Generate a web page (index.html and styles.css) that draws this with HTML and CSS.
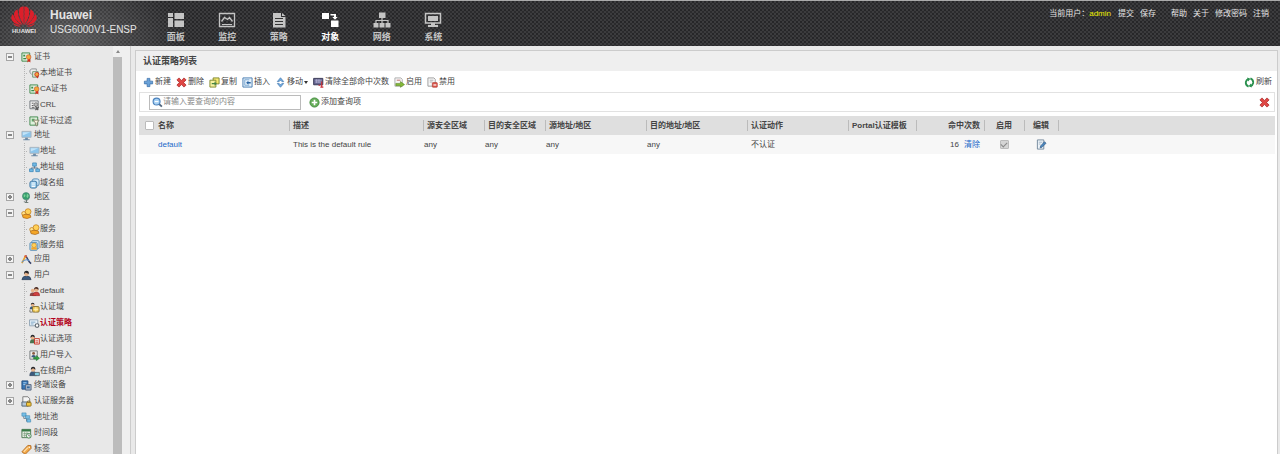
FILE: index.html
```html
<!DOCTYPE html>
<html lang="zh-CN">
<head>
<meta charset="utf-8">
<title>Huawei USG6000V1-ENSP</title>
<link rel="stylesheet" href="styles.css">
</head>
<body>
<svg class="sprite" aria-hidden="true">
  <symbol id="cert" viewBox="0 0 12 12"><path d="M1 1h8.500v9H1z" fill="#dff0dc" stroke="#3b8748"/><path d="M2.500 3h2v2h-2zM2.500 6.500h3v1.500h-3z" fill="#398a49"/><path d="M7.500 7l-.7 4.500L8.500 10l1.800 1.500L10 7z" fill="#d52a1c"/><circle cx="8.300" cy="5.500" r="2.600" fill="#f3a83a" stroke="#c9472a" stroke-width=".6"/></symbol>
  <symbol id="localcert" viewBox="0 0 12 12"><path d="M1 5V2.500L3 1h5v2M1 5l2 2" fill="#eee" stroke="#8a8d91"/><path d="M4 4h6v6H4z" fill="#dff0dc" stroke="#6d8d6b"/><circle cx="8.500" cy="7" r="2.200" fill="#f3a83a" stroke="#c9372a"/><path d="M7.500 9l2 2.500 1-2.500z" fill="#d52a1c"/></symbol>
  <symbol id="crl" viewBox="0 0 12 12"><path d="M1 1h9v8.500H1z" fill="#f1f1f1" stroke="#6f7478"/><path d="M3 3.500h2M3 6h2M3 8h3" stroke="#555"/><circle cx="7.500" cy="5" r="2" fill="#bbb" stroke="#777"/><path d="M7 7l3 4M10.500 7.500L7 11" stroke="#555" stroke-width="1.300"/></symbol>
  <symbol id="certfilter" viewBox="0 0 12 12"><path d="M1 1h8.500v9H1z" fill="#dff0dc" stroke="#3b8748"/><path d="M3 3h3v3H3z" fill="#5aa765"/><path d="M4.500 4.500h6.500L8.800 7.500V11L7 10V7.500z" fill="#fff5dd" stroke="#7c7f68"/></symbol>
  <symbol id="pc" viewBox="0 0 12 12"><path d="M1 1.500h10v6.500H1z" fill="#8bc5ec" stroke="#a9b5c0"/><path d="M2 2.500h8L2 6z" fill="#c2e3f8"/><path d="M4.500 8.500h3v1.500h2v1.300h-7V10h2z" fill="#6d8ba6"/></symbol>
  <symbol id="pcs" viewBox="0 0 12 12"><path d="M6 4v3M2.500 8V6.500h7V8" fill="none" stroke="#60758a"/><path d="M4 1h4v3.500H4zM.6 7.500h4v3h-4zM7.400 7.500h4v3h-4z" fill="#71bae5" stroke="#3b83b5" stroke-width=".8"/></symbol>
  <symbol id="domain" viewBox="0 0 12 12"><rect x="3.500" y="1" width="7.500" height="7.500" rx="2" fill="#d4eaf8" stroke="#4d87b2"/><rect x="1" y="3.500" width="7.500" height="7.500" rx="2" fill="#9dcdec" stroke="#37719f"/><path d="M3 5.500h3.500M3 7.500h3.500M3 9.300h3.500" stroke="#fff"/></symbol>
  <symbol id="globe" viewBox="0 0 12 12"><path d="M3 10.500q5-.5 6.500-5" fill="none" stroke="#8d9396"/><circle cx="5.500" cy="4.500" r="3.900" fill="#34a06d" stroke="#4c8375" stroke-width=".7"/><path d="M3 2.500l2 .5-.5 2L3 6zM6.500 1.500l2 2-1 3-1.500-1z" fill="#7dd19a"/><path d="M6 8.500v3M4 11.500h4" stroke="#64726c"/></symbol>
  <symbol id="service" viewBox="0 0 12 12"><circle cx="7.700" cy="4" r="3.200" fill="#ffd159" stroke="#c17c17" stroke-width=".8"/><circle cx="3" cy="6" r="2.200" fill="#ffe18b" stroke="#c17c17" stroke-width=".8"/><path d="M1.500 8l3-1.200 5.500.7.800 2.500-4 1.500-4.500-1z" fill="#f4a626" stroke="#a96719" stroke-width=".8"/></symbol>
  <symbol id="servicegroup" viewBox="0 0 12 12"><rect x="3" y=".8" width="8" height="8.500" rx="1" fill="#d3e8f7" stroke="#5c8eb4"/><rect x="1" y="2.800" width="8" height="8.500" rx="1" fill="#b2d4ec" stroke="#5c8eb4"/><circle cx="5.500" cy="5.800" r="2.500" fill="#ffd159" stroke="#c17c17" stroke-width=".6"/><path d="M2.500 8h6v2.500h-6z" fill="#f4a626"/></symbol>
  <symbol id="app" viewBox="0 0 12 12"><path d="M1 10L5 2" stroke="#e8a32b" stroke-width="1.800"/><path d="M5 1.500l4 7 2 2" fill="none" stroke="#333f68" stroke-width="1.600"/><path d="M1 9q3-4 8-2" fill="none" stroke="#5b91d0" stroke-width="1.200"/><circle cx="5" cy="2.500" r="1.300" fill="#dd6545"/></symbol>
  <symbol id="user" viewBox="0 0 12 12"><path d="M1 10.500q.4-4 5-4t5 4z" fill="#3b5a7e" stroke="#28394e" stroke-width=".7"/><circle cx="6" cy="4" r="2.700" fill="#e7b48c"/><path d="M3.300 4q0-3.300 2.700-3.300T8.700 4Q6 3.500 5 2.700 4.300 4 3.300 4z" fill="#26282d"/></symbol>
  <symbol id="userred" viewBox="0 0 12 12"><circle cx="4" cy="5" r="2" fill="#e7b48c"/><path d="M.8 11q0-3.800 3.200-3.800T8 11z" fill="#8a4a4a"/><path d="M4 10.500q.4-4 4-4t3.600 4z" fill="#cf4040" stroke="#8c2525" stroke-width=".6"/><circle cx="8" cy="4" r="2.400" fill="#e7b48c"/><path d="M5.500 4Q5.500 1 8 1t2.500 3L7.500 2.700z" fill="#4a2a22"/></symbol>
  <symbol id="userdomain" viewBox="0 0 12 12"><path d="M.8 8q0-3.500 3-3.500T7 8z" fill="#3b5a7e"/><circle cx="4" cy="3" r="2" fill="#e7b48c"/><path d="M2 3q0-2.300 2-2.300T6 3L4 2z" fill="#26282d"/><rect x="4" y="5" width="7" height="6" rx="1" fill="#f6d05d" stroke="#80692c"/><path d="M5 8h5M7.500 5.500v5" stroke="#fff3bc"/><path d="M1 8.500v2.500h3" fill="none" stroke="#777"/></symbol>
  <symbol id="policy" viewBox="0 0 12 12"><path d="M.6 2h9v6.500h-9z" fill="#e9f2f9" stroke="#8ca1b2"/><path d="M2 4.500h5M2 6.500h3" stroke="#76a1c3"/><circle cx="8.800" cy="8.300" r="2" fill="#fff" stroke="#636b73" stroke-width="1.300"/></symbol>
  <symbol id="useroption" viewBox="0 0 12 12"><path d="M1 10q0-4.500 3.500-4.500T8 10z" fill="#4b7550"/><circle cx="4" cy="3.800" r="2.300" fill="#e7b48c"/><path d="M1.600 4q0-3.200 2.400-3.200T6.400 4L4 2.500z" fill="#26282d"/><path d="M6 5h5.300v6H6z" fill="#f8e9e6" stroke="#c33729"/><path d="M7 7.500h3M7 9.500h3" stroke="#d34a3b"/></symbol>
  <symbol id="userimport" viewBox="0 0 12 12"><path d="M1 1h8v9H1z" fill="#eee" stroke="#72777a"/><circle cx="5" cy="3.700" r="1.600" fill="#8b5d45"/><path d="M2.500 8q0-2.500 2.500-2.500T7.500 8z" fill="#3b5a7e"/><path d="M5 8h3V6l3.500 3L8 11.700v-2H5z" fill="#31a342" stroke="#176a28" stroke-width=".5"/></symbol>
  <symbol id="useronline" viewBox="0 0 12 12"><path d="M.8 10.500q.2-4.500 3.700-4.500T8 10.500z" fill="#3b5a7e" stroke="#28394e" stroke-width=".6"/><circle cx="4.500" cy="4" r="2.300" fill="#e7b48c"/><path d="M2 4q0-3.200 2.500-3.200T7 4L4.500 2.500z" fill="#26282d"/><path d="M6 7h5.300v3.500H6z" fill="#83cde0" stroke="#44525b" stroke-width=".8"/></symbol>
  <symbol id="device" viewBox="0 0 12 12"><path d="M1 1h6.500v9H1z" fill="#3978b8" stroke="#244e80"/><path d="M2.500 3H6M2.500 5H6" stroke="#add4f2"/><path d="M5 5h6v6H5z" fill="#a8b9ce" stroke="#53657e"/><path d="M6.500 7h3v2h-3z" fill="#34689e"/></symbol>
  <symbol id="authserver" viewBox="0 0 12 12"><path d="M2 .8h5.500L9.500 3v7.500H2z" fill="#f5f5f5" stroke="#777"/><path d="M1 6.500h7V11H1z" fill="#b5c7d8" stroke="#526575"/><rect x="6" y="7" width="5" height="4" rx=".5" fill="#f3c73b" stroke="#8e7223"/><path d="M7.300 7V5.500h2.400V7" fill="none" stroke="#8e7223"/></symbol>
  <symbol id="pool" viewBox="0 0 12 12"><path d="M3 4v3h3M6 6v4h3" fill="none" stroke="#6c7f8d"/><path d="M1 1h4.500v3.500H1zM5 4h4.500v3H5zM6.500 8h4v3h-4z" fill="#76bfe7" stroke="#458bb5" stroke-width=".7"/></symbol>
  <symbol id="time" viewBox="0 0 12 12"><path d="M1 1.500h9.500v9H1z" fill="#e7f0e4" stroke="#4c7551"/><path d="M1 1.500h9.500v2.300H1z" fill="#387b47"/><path d="M2.500 6h6M2.500 8h6M4 4v6M6.500 4v6" stroke="#7d987e" stroke-width=".7"/><circle cx="8.500" cy="8.500" r="2.500" fill="#fff" stroke="#4b8d56"/><path d="M8.500 7v1.700h1.300" fill="none" stroke="#333" stroke-width=".7"/></symbol>
  <symbol id="tag" viewBox="0 0 12 12"><path d="M1 8.500L7.500 1.500l3.300.3.200 3L4.500 11.300z" fill="#f2a848" stroke="#b56c22"/><path d="M3 8.500L7.500 4" stroke="#ffdda4" stroke-width="1.400"/><circle cx="9" cy="3.500" r=".8" fill="#fff"/></symbol>
  <symbol id="add" viewBox="0 0 12 12"><path d="M4.500 1.500h3v3h3v3h-3v3h-3v-3h-3v-3h3z" fill="#6aa2d8" stroke="#3b6fa8" stroke-width=".8"/></symbol>
  <symbol id="del" viewBox="0 0 12 12"><path d="M3.200 1L6 3.700 8.800 1 11 3.200 8.300 6 11 8.800 8.800 11 6 8.300 3.200 11 1 8.800 3.700 6 1 3.200z" fill="#df4744" stroke="#a92525" stroke-width=".8"/></symbol>
  <symbol id="copy" viewBox="0 0 12 12"><path d="M4.500 1h6.500v6.500H4.500z" fill="#f5e870" stroke="#7d852d"/><path d="M1 3.500h6.500V11H1z" fill="#f7f1a0" stroke="#7d852d"/><path d="M3 6.500h3V5l2.500 2.300L6 9.500V8H3z" fill="#458444"/></symbol>
  <symbol id="insert" viewBox="0 0 12 12"><path d="M1 1h10v10H1z" fill="#e5f1fb" stroke="#4379af"/><path d="M3 3h5M3 3v6h5" fill="none" stroke="#7aa7d1"/><path d="M9.500 5.500H7V4L4.500 6.200 7 8.500V7h2.500z" fill="#2a64a2"/></symbol>
  <symbol id="move" viewBox="0 0 12 12"><path d="M6 .8L9.500 5h-2L6 3.500 4.500 5h-2zM6 11.200L9.500 7h-2L6 8.500 4.500 7h-2z" fill="#72abdf" stroke="#3e75ad" stroke-width=".7"/></symbol>
  <symbol id="clear" viewBox="0 0 12 12"><path d="M.7 1.500h10v7h-10z" fill="#65658f" stroke="#353552"/><path d="M2 3.500h7.500M2 5.500h7.500M4 2.500v4M6.500 2.500v4" stroke="#b9b8d8" stroke-width=".8"/><path d="M6 9h2M9.500 5v6M8 11h3.300" stroke="#c92e37" stroke-width="1.300"/></symbol>
  <symbol id="enable" viewBox="0 0 12 12"><path d="M1 1h6.500L9 2.500V10H1z" fill="#f8f8f8" stroke="#aaa"/><path d="M3 3.500h4" stroke="#bb6666"/><path d="M2 7h5V5l4.500 3.300L7 11.300V9.500H2z" fill="#84b936" stroke="#557e20" stroke-width=".6"/></symbol>
  <symbol id="disable" viewBox="0 0 12 12"><path d="M1 1h6.500L9 2.500V10H1z" fill="#f8f8f8" stroke="#999"/><path d="M3 3.500h4M3 5.500h3" stroke="#aaa"/><rect x="5.800" y="6" width="5.500" height="5.300" rx="1" fill="#d85449" stroke="#ab332b" stroke-width=".6"/><path d="M7 8.700h3.200" stroke="#fff" stroke-width="1.300"/></symbol>
  <symbol id="refresh" viewBox="0 0 12 12"><path d="M5 10.500Q1.500 9 2 5.500 2.500 3 5 2M7 1.500Q10.500 3 10 6.500 9.500 9 7 10" fill="none" stroke="#2b914f" stroke-width="2"/><path d="M3.500.5L7 2 4.500 5zM8.500 11.500L5 10l2.500-3z" fill="#2b914f"/></symbol>
  <symbol id="search" viewBox="0 0 12 12"><path d="M7.500 7.500l3.300 3" stroke="#4f647a" stroke-width="2"/><circle cx="5" cy="5" r="3.800" fill="#a8d1f4" stroke="#4b82bd" stroke-width="1.200"/><path d="M3 5h4" stroke="#fff" stroke-width="1.200"/></symbol>
  <symbol id="addround" viewBox="0 0 12 12"><circle cx="6" cy="6" r="5" fill="#66ad5a" stroke="#438c3d"/><path d="M6 3v6M3 6h6" stroke="#fff" stroke-width="1.800"/></symbol>
  <symbol id="edit" viewBox="0 0 12 12"><path d="M1.500 1h7v10h-7z" fill="#eef4f9" stroke="#71859a"/><path d="M3 3.500h4M3 5.500h2" stroke="#a2b5c6"/><path d="M4.500 9.500l.5-2L9.300 3l1.700 1.600-4.500 4.500z" fill="#4a86bf" stroke="#2d537b" stroke-width=".7"/></symbol>
</svg>

<header class="topbar">
  <div class="brand">
    <svg class="logo" viewBox="0 0 28 22" role="img" aria-label="Huawei">
      <g fill="#dc1f2a"><path d="M13.700 20Q6 8 9.500 2q2-1.700 4.200-1.500z"/><path d="M14.300 20Q22 8 18.500 2 16.500.3 14.300.5z"/><path d="M12.700 20.200Q2.500 13.500 3.500 7.500 4 5 7.300 3.500q0 8.500 5.400 16.700z"/><path d="M15.300 20.200Q25.500 13.500 24.500 7.500 24 5 20.700 3.500q0 8.500-5.400 16.700z"/><path d="M11.700 20.500Q.6 18 .6 12.500q0-2.300 1.700-4 2.200 7 9.400 12z"/><path d="M16.300 20.500q11.100-2.500 11.100-8 0-2.300-1.700-4-2.200 7-9.400 12z"/><path d="M11 21.200q-6 1.300-8.500-3 4 2.300 8.500 3zM17 21.200q6 1.300 8.500-3-4 2.300-8.500 3z"/></g>
    </svg>
    <span class="logo-word">HUAWEI</span>
  </div>
  <div class="product"><strong>Huawei</strong><span>USG6000V1-ENSP</span></div>
  <nav class="mainnav">
    <a href="#"><svg viewBox="0 0 18 16"><path fill="currentColor" d="M1 1h5v4H1zM1 6h5v9H1zM7.500 1H17v6H7.500zM7.500 8.500H17V15H7.500z"/></svg>面板</a>
    <a href="#"><svg viewBox="0 0 18 16"><path fill="none" stroke="currentColor" stroke-width="1.300" d="M1.500 1.500h15v13h-15zM3.500 9.500l3-4 3 2 2-2 3 4"/><path fill="currentColor" d="M4 12h10v1H4z"/></svg>监控</a>
    <a href="#"><svg viewBox="0 0 18 16"><path fill="currentColor" d="M3 1h8v4h4.500v10.500H3z"/><path fill="currentColor" d="M12 1l3.500 3H12z"/><path stroke="#333" d="M5 6.500h8M5 9.500h8M5 12.500h8"/></svg>策略</a>
    <a href="#" class="current"><svg viewBox="0 0 18 16"><path fill="currentColor" d="M1 1h7v6H1zM10 8.500h7.500V15H10zM9.500 2H15v3h1.800L14 7.800 11.200 5H13V3.500H9.500z"/></svg>对象</a>
    <a href="#"><svg viewBox="0 0 18 16"><path fill="currentColor" d="M6 .5h6.500V6H6zM.5 11h5v4.500h-5zM6.500 11h5v4.500h-5zM12.500 11h5v4.500h-5z"/><path fill="none" stroke="currentColor" stroke-width="1.200" d="M9 6v5M3 11V8.500h12V11"/></svg>网络</a>
    <a href="#"><svg viewBox="0 0 18 16"><path fill="none" stroke="currentColor" stroke-width="1.500" d="M1.500 1.500h15v9.500h-15z"/><path fill="currentColor" d="M4 4h10v5H4zM7 11h4v2h3v2H4v-2h3z"/></svg>系统</a>
  </nav>
  <div class="account">
    <span>当前用户：<b>admin</b></span>
    <span class="links"><a href="#">提交</a><a href="#">保存</a></span>
    <span class="links"><a href="#">帮助</a><a href="#">关于</a><a href="#">修改密码</a><a href="#">注销</a></span>
  </div>
</header>

<div class="workspace">
  <aside class="sidebar">
    <ul class="tree">
      <li><button class="toggle open" aria-label="折叠"></button><a href="#"><svg><use href="#cert"/></svg>证书</a>
        <ul><li><a href="#"><svg><use href="#localcert"/></svg>本地证书</a></li><li><a href="#"><svg><use href="#cert"/></svg>CA证书</a></li><li><a href="#"><svg><use href="#crl"/></svg>CRL</a></li><li><a href="#"><svg><use href="#certfilter"/></svg>证书过滤</a></li></ul></li>
      <li><button class="toggle open" aria-label="折叠"></button><a href="#"><svg><use href="#pc"/></svg>地址</a>
        <ul><li><a href="#"><svg><use href="#pc"/></svg>地址</a></li><li><a href="#"><svg><use href="#pcs"/></svg>地址组</a></li><li><a href="#"><svg><use href="#domain"/></svg>域名组</a></li></ul></li>
      <li><button class="toggle" aria-label="展开"></button><a href="#"><svg><use href="#globe"/></svg>地区</a></li>
      <li><button class="toggle open" aria-label="折叠"></button><a href="#"><svg><use href="#service"/></svg>服务</a>
        <ul><li><a href="#"><svg><use href="#service"/></svg>服务</a></li><li><a href="#"><svg><use href="#servicegroup"/></svg>服务组</a></li></ul></li>
      <li><button class="toggle" aria-label="展开"></button><a href="#"><svg><use href="#app"/></svg>应用</a></li>
      <li><button class="toggle open" aria-label="折叠"></button><a href="#"><svg><use href="#user"/></svg>用户</a>
        <ul><li><a href="#"><svg><use href="#userred"/></svg>default</a></li><li><a href="#"><svg><use href="#userdomain"/></svg>认证域</a></li><li><a href="#" class="selected"><svg><use href="#policy"/></svg>认证策略</a></li><li><a href="#"><svg><use href="#useroption"/></svg>认证选项</a></li><li><a href="#"><svg><use href="#userimport"/></svg>用户导入</a></li><li><a href="#"><svg><use href="#useronline"/></svg>在线用户</a></li></ul></li>
      <li><button class="toggle" aria-label="展开"></button><a href="#"><svg><use href="#device"/></svg>终端设备</a></li>
      <li><button class="toggle" aria-label="展开"></button><a href="#"><svg><use href="#authserver"/></svg>认证服务器</a></li>
      <li class="leaf"><a href="#"><svg><use href="#pool"/></svg>地址池</a></li>
      <li class="leaf"><a href="#"><svg><use href="#time"/></svg>时间段</a></li>
      <li class="leaf"><a href="#"><svg><use href="#tag"/></svg>标签</a></li>
    </ul>
    <div class="scrollbar"><span class="arrow"></span><span class="thumb"></span></div>
  </aside>

  <main class="panel">
    <h1>认证策略列表</h1>
    <div class="toolbar">
      <button><svg><use href="#add"/></svg>新建</button>
      <button><svg><use href="#del"/></svg>删除</button>
      <button><svg><use href="#copy"/></svg>复制</button>
      <button><svg><use href="#insert"/></svg>插入</button>
      <button><svg><use href="#move"/></svg>移动<i class="caret"></i></button>
      <button><svg><use href="#clear"/></svg>清除全部命中次数</button>
      <button><svg><use href="#enable"/></svg>启用</button>
      <button><svg><use href="#disable"/></svg>禁用</button>
      <button class="end"><svg><use href="#refresh"/></svg>刷新</button>
    </div>
    <form class="query">
      <label class="searchbox"><svg><use href="#search"/></svg><input type="text" aria-label="查询" placeholder="请输入要查询的内容"></label>
      <button type="button"><svg><use href="#addround"/></svg>添加查询项</button>
      <button type="button" class="end" aria-label="关闭"><svg><use href="#del"/></svg></button>
    </form>
    <table class="rules">
      <colgroup><col class="w-check"><col class="w-name"><col class="w-name"><col class="w-zone"><col class="w-zone"><col class="w-addr"><col class="w-addr"><col class="w-addr"><col class="w-hits"><col class="w-hits"><col class="w-on"><col class="w-edit"><col></colgroup>
      <thead><tr><th class="check"><input type="checkbox" aria-label="全选"></th><th class="name">名称</th><th>描述</th><th>源安全区域</th><th>目的安全区域</th><th>源地址/地区</th><th>目的地址/地区</th><th>认证动作</th><th>Portal认证模板</th><th class="right">命中次数</th><th class="center">启用</th><th class="center">编辑</th><th></th></tr></thead>
      <tbody><tr><td></td><td class="name"><a href="#">default</a></td><td>This is the default rule</td><td class="tight">any</td><td class="tight">any</td><td class="tight">any</td><td class="tight">any</td><td>不认证</td><td></td><td class="right">16<a href="#" class="reset">清除</a></td><td class="center"><input type="checkbox" checked disabled aria-label="启用"></td><td class="center"><button aria-label="编辑"><svg><use href="#edit"/></svg></button></td><td></td></tr></tbody>
    </table>
  </main>
</div>
</body>
</html>
```

FILE: styles.css
```css
* { box-sizing: border-box; }

body {
  display: flex;
  flex-direction: column;
  height: 100vh;
  margin: 0;
  overflow: hidden;
  background: #e9e9e9;
  color: #444;
  font: 8px/16px "Liberation Sans", "Noto Sans CJK SC", sans-serif;
}

a { color: inherit; text-decoration: none; }
ul { margin: 0; padding: 0; list-style: none; }
svg { display: block; flex: none; width: 11px; height: 11px; }
.sprite { position: absolute; width: 0; height: 0; }

button {
  display: flex;
  align-items: center;
  padding: 0;
  border: 0;
  background: none;
  color: inherit;
  font: inherit;
}

/* Top bar */
.topbar {
  display: flex;
  flex: none;
  height: 46px;
  border-top: 1px solid #aaa;
  background:
    radial-gradient(ellipse 110px 70px at 70px 40px, rgba(255, 255, 255, .22), transparent),
    radial-gradient(circle at 1px 1px, #262628 1px, transparent 1px) 0 0 / 4px 4px,
    radial-gradient(circle at 3px 3px, #2b2b2d 1px, transparent 1px) 0 0 / 4px 4px,
    #3c3c3e;
  color: #e4e4e4;
}

.brand {
  display: flex;
  flex-direction: column;
  align-items: center;
  width: 48px;
  padding-top: 5px;
}
.logo { width: 28px; height: 21px; }
.logo-word { font-size: 6px; font-weight: bold; line-height: 9px; }

.product {
  display: flex;
  flex-direction: column;
  width: 102px;
  padding: 6px 0 0 2px;
  font-size: 10px;
  line-height: 14px;
  white-space: nowrap;
}
.product strong { font-size: 12px; line-height: 16px; }

.mainnav { display: grid; grid-template-columns: repeat(6, 1fr); width: 309px; }
.mainnav a {
  display: flex;
  flex-direction: column;
  align-items: center;
  padding-top: 11px;
  color: #c4c4c4;
  font-size: 9px;
  font-weight: bold;
  line-height: 18px;
}
.mainnav svg { width: 18px; height: 16px; }
.mainnav .current { color: #fff; }

.account {
  display: flex;
  gap: 7px;
  margin-left: auto;
  padding: 5px 11px 0 0;
  white-space: nowrap;
}
.account b { color: #ee0; font-weight: normal; }
.links { display: flex; gap: 6px; }
.links + .links { margin-left: 8px; }

/* Sidebar */
.workspace { display: flex; flex: 1; min-height: 0; }

.sidebar {
  display: flex;
  flex: none;
  width: 131px;
  border-right: 1px solid #ccc;
  background: #e8e8e8;
  overflow: hidden;
}
.tree { flex: 1; padding: 3px 0 0 6px; white-space: nowrap; }
.tree > li { display: grid; grid-template-columns: 15px 1fr; align-items: center; }
.tree a { display: flex; align-items: center; gap: 2px; height: 16px; }
.tree .leaf a { grid-column: 2; }
.tree ul { grid-column: 1 / -1; margin: 0 0 -2px 18px; }
.tree ul li {
  display: flex;
  align-items: center;
  background:
    repeating-linear-gradient(#b5b5b5 0 1px, transparent 1px 2px) left top / 1px 100% no-repeat,
    repeating-linear-gradient(90deg, #b5b5b5 0 1px, transparent 1px 2px) left center / 4px 1px no-repeat;
  padding-left: 5px;
}
.tree ul li:last-child {
  background-size: 1px 50%, 4px 1px;
}
.tree ul a { gap: 0; }
.tree .selected { color: #b3001b; font-weight: bold; }

.toggle {
  width: 8px;
  height: 8px;
  border: 1px solid #a5a5a5;
  background:
    linear-gradient(#888, #888) center / 4px 2px no-repeat,
    linear-gradient(#888, #888) center / 2px 4px no-repeat,
    #f5f5f5;
}
.toggle.open { background: linear-gradient(#888, #888) center / 4px 2px no-repeat, #f5f5f5; }

.scrollbar {
  display: flex;
  flex-direction: column;
  width: 17px;
  padding-right: 8px;
  background: #efefef;
}
.arrow {
  align-self: center;
  margin: 4px 0;
  border: 2px solid transparent;
  border-top-width: 0;
  border-bottom: 3px solid #888;
}
.thumb { flex: 1; background: #bcbcbc; }

/* Content panel */
.panel {
  flex: 1;
  min-width: 0;
  margin: 4px 2px 0 4px;
  border: 1px solid #ccc;
  border-bottom: 0;
  background: #fff;
}
.panel h1 {
  margin: 0;
  padding: 1px 7px;
  background: #efefef;
  font-size: 9px;
  line-height: 18px;
}

.toolbar { display: flex; align-items: center; gap: 5px; padding: 3px 5px 2px 7px; }
.toolbar button { gap: 1px; white-space: nowrap; }
.caret { border: 2px solid transparent; border-top: 3px solid #333; border-bottom: 0; }
.end { margin-left: auto; }

.query {
  display: flex;
  align-items: center;
  gap: 8px;
  height: 20px;
  margin: 0 2px 4px 3px;
  padding: 0 4px 0 9px;
  border: 1px solid #e2e2e2;
}
.query button { gap: 1px; }
.searchbox {
  display: flex;
  align-items: center;
  width: 152px;
  height: 15px;
  padding-left: 2px;
  border: 1px solid #bbb;
}
.searchbox input {
  flex: 1;
  min-width: 0;
  padding: 0;
  border: 0;
  outline: 0;
  background: none;
  font: inherit;
}
.searchbox input::placeholder { color: #888; opacity: 1; }

/* Rules table */
.rules {
  width: calc(100% - 5px);
  margin-left: 3px;
  border-collapse: collapse;
  table-layout: fixed;
}
.rules th, .rules td { height: 19px; padding: 0 3px; text-align: left; white-space: nowrap; }
.rules thead { background: #dfdfdf; }
.rules tbody { background: #f7f7f7; }
.rules th {
  background: linear-gradient(#bbb, #bbb) left center / 1px 11px no-repeat;
  padding-left: 4px;
}
.rules td { padding-left: 4px; }
.rules td.tight { padding-left: 1px; }
.rules th.check { padding: 0 0 0 6px; background: none; }
.rules th.name { padding-left: 3px; background: none; }
.rules td.name { padding-left: 3px; }
.rules .right { padding-right: 4px; text-align: right; }
.rules .center { padding: 0; text-align: center; }
.rules a { color: #1b68c9; }
.rules .reset { margin-left: 5px; }
.rules button { margin: auto; }
.rules input {
  display: block;
  width: 9px;
  height: 9px;
  margin: 0;
  appearance: none;
  border: 1px solid #bbb;
  border-radius: 1px;
  background: #fff;
}
.rules td input {
  margin: auto;
  background: #d5d5d5;
}
.rules td input::before {
  content: "";
  display: block;
  width: 3px;
  height: 5px;
  margin: 0 auto;
  border: solid #888;
  border-width: 0 1px 1px 0;
  transform: rotate(45deg);
}

.w-check { width: 16px; }
.w-name { width: 134px; }
.w-zone { width: 61px; }
.w-addr { width: 101px; }
.w-hits { width: 68px; }
.w-on { width: 40px; }
.w-edit { width: 34px; }
```
